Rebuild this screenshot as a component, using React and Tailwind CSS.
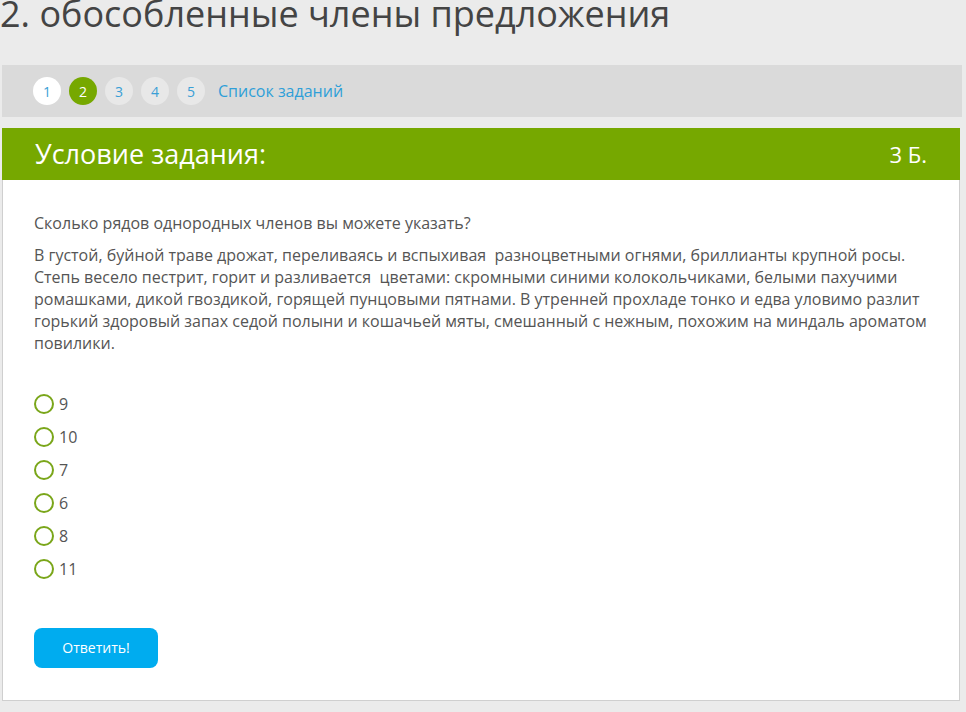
import React from 'react';

const answers = ['9', '10', '7', '6', '8', '11'];

const App = () => {
  return (
    <div className="min-h-[712px] bg-[#ebebeb] text-[#555] overflow-hidden" style={{ fontFamily: '"Open Sans", "Noto Sans", sans-serif' }}>
      <h1 className="text-[36px] leading-[36px] -mt-[4px] text-[#444] whitespace-nowrap">
        2. обособленные члены предложения
      </h1>

      {/* Tasks nav */}
      <div className="mt-[33px] ml-[2px] mr-[4px] h-[52px] bg-[#dadada] flex items-center pl-[31px] gap-2">
        {[1, 2, 3, 4, 5].map((n) => (
          <span
            key={n}
            className={`w-[28px] h-[28px] rounded-full flex items-center justify-center text-[14px] ${
              n === 1 ? 'bg-white text-[#3a9fd6]' : n === 2 ? 'bg-[#76a800] text-white' : 'bg-[#e8e8e8] text-[#3a9fd6]'
            }`}
          >
            {n}
          </span>
        ))}
        <a className="ml-[5px] text-[16px] text-[#2f9fd8]">Список заданий</a>
      </div>

      {/* Task card */}
      <div className="mt-[11px] ml-[2px] mr-[6px] border border-[#cfcfcf] bg-white">
        <div className="-mx-px -mt-px h-[52px] bg-[#76a800] flex items-center justify-between pl-[33px] pr-[33px] text-white">
          <span className="text-[27px]">Условие задания:</span>
          <span className="text-[22px]">3 Б.</span>
        </div>
        <div className="pl-[31px] pr-[30px] pt-[32px] pb-[32px] text-[16px] leading-[22px] text-[#555]">
          <p>Сколько рядов однородных членов вы можете указать?</p>
          <p className="mt-[10px]">
            В густой, буйной траве дрожат, переливаясь и вспыхивая&nbsp; разноцветными огнями, бриллианты крупной росы.
            Степь весело пестрит, горит и разливается&nbsp; цветами: скромными синими колокольчиками, белыми пахучими
            ромашками, дикой гвоздикой, горящей пунцовыми пятнами. В утренней прохладе тонко и едва уловимо разлит
            горький здоровый запах седой полыни и кошачьей мяты, смешанный с нежным, похожим на миндаль ароматом
            повилики.
          </p>
          <div className="mt-[33px] flex flex-col">
            {answers.map((a) => (
              <label key={a} className="h-[33px] flex items-center gap-[5px] text-[16px] text-[#555]">
                <span className="w-[20px] h-[20px] rounded-full border-2 border-[#7aa61a] bg-white" />
                {a}
              </label>
            ))}
          </div>
          <button className="mt-[43px] w-[124px] h-[40px] rounded-[8px] bg-[#00acef] text-white text-[14px]">
            Ответить!
          </button>
        </div>
      </div>
    </div>
  );
};

export default App;
